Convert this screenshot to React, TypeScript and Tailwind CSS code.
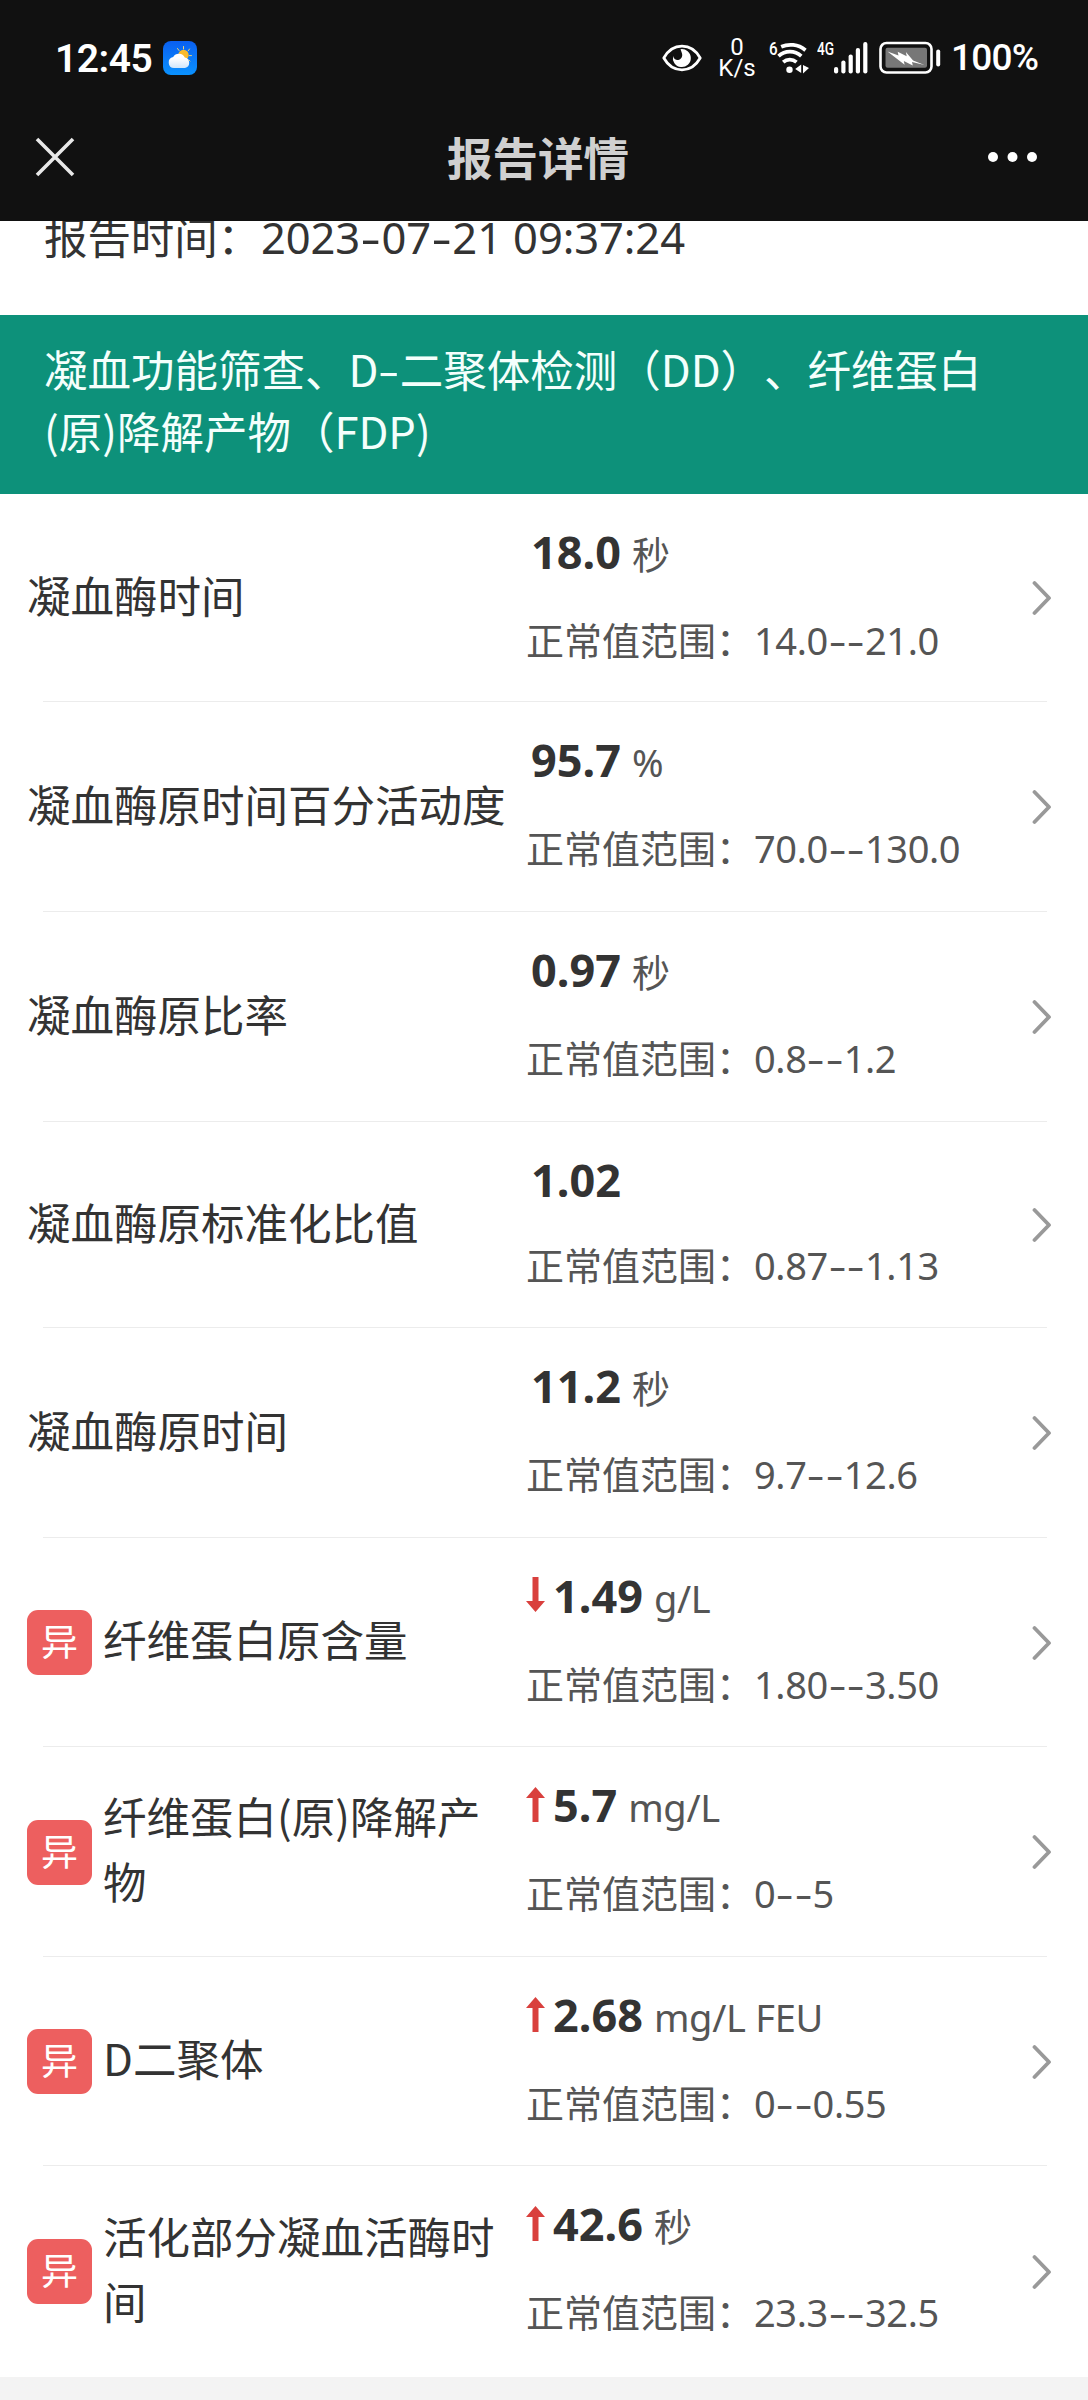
import React from "react";

type Item = {
  name: string;
  value: string;
  unit?: string;
  range: string;
  trend?: "up" | "down";
  height: string;
};

const items: Item[] = [
  { name: "凝血酶时间", value: "18.0", unit: "秒", range: "14.0--21.0", height: "h-[208px]" },
  { name: "凝血酶原时间百分活动度", value: "95.7", unit: "%", range: "70.0--130.0", height: "h-[210px]" },
  { name: "凝血酶原比率", value: "0.97", unit: "秒", range: "0.8--1.2", height: "h-[210px]" },
  { name: "凝血酶原标准化比值", value: "1.02", range: "0.87--1.13", height: "h-[206px]" },
  { name: "凝血酶原时间", value: "11.2", unit: "秒", range: "9.7--12.6", height: "h-[210px]" },
  { name: "纤维蛋白原含量", value: "1.49", unit: "g/L", range: "1.80--3.50", trend: "down", height: "h-[209px]" },
  { name: "纤维蛋白(原)降解产物", value: "5.7", unit: "mg/L", range: "0--5", trend: "up", height: "h-[210px]" },
  { name: "D二聚体", value: "2.68", unit: "mg/L FEU", range: "0--0.55", trend: "up", height: "h-[209px]" },
  { name: "活化部分凝血活酶时间", value: "42.6", unit: "秒", range: "23.3--32.5", trend: "up", height: "h-[211px]" },
];

const latin = "font-['Noto_Sans','Noto_Sans_CJK_SC',sans-serif]";
const cjk = "font-['Noto_Sans_CJK_SC',sans-serif]";
const roboto = "font-['Roboto',sans-serif]";

/** Text whose hyphens are drawn as wide as a digit's body. */
function Dashed({ text }: { text: string }) {
  return (
    <>
      {text.split(/(-)/).map((part, i) =>
        part === "-" ? (
          <span key={i} className="inline-block w-[0.49em] scale-x-[1.45] text-center">
            -
          </span>
        ) : (
          <React.Fragment key={i}>{part}</React.Fragment>
        ),
      )}
    </>
  );
}

function WeatherIcon() {
  return (
    <svg className="ml-[11px] h-[34px] w-[34px]" viewBox="0 0 34 34">
      <defs>
        <linearGradient id="sky" x1="0" y1="0" x2="0" y2="1">
          <stop offset="0" stopColor="#0a5ff0" />
          <stop offset="1" stopColor="#0a92ff" />
        </linearGradient>
        <linearGradient id="cloud" x1="0" y1="0" x2="0" y2="1">
          <stop offset="0.3" stopColor="#ffffff" />
          <stop offset="1" stopColor="#cfe6fb" />
        </linearGradient>
      </defs>
      <rect width="34" height="34" rx="8" fill="url(#sky)" />
      <g stroke="#e9d27a" strokeWidth="1" strokeLinecap="round">
        <path d="M20.5 5.5v2.5M14.5 7.5l1.5 2M26.5 8l-1.3 1.8M28.5 14.6h-2.3M27 20l-1.2-1" />
      </g>
      <circle cx="20.5" cy="14" r="5.2" fill="#f9bb2d" />
      <path d="M11 27a5.5 5.5 0 0 1-.8-10.9 6.5 6.5 0 0 1 11.6.5A5.3 5.3 0 0 1 22 27z" fill="url(#cloud)" />
    </svg>
  );
}

function EyeIcon() {
  return (
    <svg className="h-[28px] w-[40px]" viewBox="0 0 40 28">
      <path
        d="M1.8 14C6 6.5 12.500 2.200 20 2.200S34 6.500 38.200 14C34 21.500 27.500 25.800 20 25.800S6 21.500 1.800 14z"
        fill="none"
        stroke="#fff"
        strokeWidth="2.800"
        strokeLinejoin="round"
      />
      <path d="M18.500 5.200a9 9 0 1 1-7.400 6.700c.6 2.800 2.700 4.300 5 4 3-.4 4.800-3.400 3.900-6.500-.4-1.700-1.100-3-1.500-4.200z" fill="#fff" />
    </svg>
  );
}

function WifiIcon() {
  return (
    <svg className="h-[34px] w-[34px]" viewBox="0 0 34 34">
      <g fill="none" stroke="#fff" strokeWidth="3.700">
        <path d="M4.200 5.800C11.500 2.500 21 3 28.500 9.200" />
        <path d="M1.500 15.200C8 9.300 17.500 9 24.300 15.200" />
        <path d="M6.200 21.200C10 17.700 15.500 17.700 19.500 21.200" />
      </g>
      <circle cx="12.500" cy="28.700" r="3.200" fill="#fff" />
      <path d="M24.200 23.500v8.500l-6-4zM26 24v8.500l6-5.500z" fill="#fff" />
    </svg>
  );
}

function SignalIcon() {
  return (
    <svg className="h-[34px] w-[34px]" viewBox="0 0 34 34" fill="#fff">
      <rect x="0" y="26" width="4.200" height="6.500" rx="2" />
      <rect x="7.300" y="19.500" width="4.200" height="13" rx="2" />
      <rect x="14.600" y="13.500" width="4.200" height="19" rx="2" />
      <rect x="21.800" y="7" width="4.200" height="25.500" rx="2" />
      <rect x="29.200" y="1" width="4.200" height="31.500" rx="2" />
    </svg>
  );
}

function BatteryIcon() {
  return (
    <svg className="h-[34px] w-[62px]" viewBox="0 0 62 34">
      <rect x="1.500" y="2" width="51" height="29.500" rx="6" fill="none" stroke="#fff" strokeWidth="2.600" />
      <rect x="6.500" y="6.800" width="41.500" height="20" rx="2" fill="#777" />
      <path d="M8.500 10.500l11 4-.8-3.800 9 4.500-.8-4.200 7.200 8.500L45.500 24l-12.500-3 .8 3.500-9-4.500.8 3.800z" fill="#fff" />
      <rect x="57.200" y="8.500" width="4" height="17" rx="2" fill="#fff" />
    </svg>
  );
}

function TrendArrow({ trend }: { trend: "up" | "down" }) {
  return (
    <svg
      className={trend === "up" ? "mt-[15px] h-[35px] w-[19px]" : "mt-[14px] h-[35px] w-[19px] rotate-180"}
      viewBox="0 0 19 35"
      fill="#d9403d"
    >
      <path d="M9.500 0L19 11H12.500V35H6.500V11H0z" />
    </svg>
  );
}

function StatusBar() {
  return (
    <div className={`flex h-[115px] items-center pl-[55px] text-white ${roboto}`}>
      <div className="pt-[2px] text-[39px] leading-[40px] font-semibold tracking-[-0.5px]">12:45</div>
      <WeatherIcon />
      <div className="ml-auto flex items-center pr-[47px]">
        <EyeIcon />
        <div className="ml-[17px] flex w-[36px] flex-col items-center text-[24px] leading-[21px]">
          <span>0</span>
          <span>K/s</span>
        </div>
        <div className="ml-[14px] h-[34px] w-[8px] text-[19px] leading-[15px] font-medium">
          <div className="origin-left scale-x-[0.8]">6</div>
        </div>
        <WifiIcon />
        <div className="ml-[6px] h-[34px] w-[17px] text-[19px] leading-[15px] font-medium">
          <div className="origin-left scale-x-[0.72]">4G</div>
        </div>
        <SignalIcon />
        <div className="ml-[11px]">
          <BatteryIcon />
        </div>
        <div className="ml-[10px] w-[90px] pt-px text-[37px] leading-[40px] font-medium tracking-[-0.8px] whitespace-nowrap">
          100%
        </div>
      </div>
    </div>
  );
}

function NavBar() {
  return (
    <div className="flex h-[83px] items-center pr-[51px] pl-[35px]">
      <svg className="h-[40px] w-[40px]" viewBox="0 0 40 40" stroke="#e8e8e8" strokeWidth="3.600">
        <path d="M2 2L38 38M38 2L2 38" />
      </svg>
      <h1
        className={`ml-[372px] pb-[2px] text-[45.500px] leading-[60px] font-bold whitespace-nowrap text-[#d0d0d0] ${cjk}`}
      >
        报告详情
      </h1>
      <svg className="ml-auto h-[10px] w-[49px]" viewBox="0 0 49 10" fill="#fff">
        <circle cx="5" cy="5" r="5" />
        <circle cx="24.500" cy="5" r="5" />
        <circle cx="44" cy="5" r="5" />
      </svg>
    </div>
  );
}

function Row({ item, last }: { item: Item; last: boolean }) {
  return (
    <div className={`relative flex pl-[27px] ${item.height}`}>
      <div className="flex w-[487px] items-center">
        {item.trend && (
          <div
            className={`mr-[11px] flex h-[65px] w-[65px] shrink-0 items-center justify-center rounded-[11px] bg-[#ed5f5f] pb-[4px] text-[37px] leading-none text-white ${cjk}`}
          >
            异
          </div>
        )}
        <div className={`pb-[8px] text-[43.500px] leading-[65px] text-[#333] ${cjk}`}>{item.name}</div>
      </div>
      <div className={`ml-[12px] flex-1 pt-[25px] ${latin}`}>
        <div className="flex h-[66px] leading-[66px]">
          {item.trend ? <TrendArrow trend={item.trend} /> : null}
          <div className={item.trend ? "ml-[8px] flex items-baseline" : "ml-[5px] flex items-baseline"}>
            <span className="text-[45px] font-bold text-[#333]">{item.value}</span>
            {item.unit && <span className="ml-[11px] text-[38px] tracking-[-0.3px] text-[#555]">{item.unit}</span>}
          </div>
        </div>
        <div
          className={`text-[38px] leading-[58px] whitespace-nowrap text-[#555] ${item.unit ? "mt-[26px]" : "mt-[23px]"}`}
        >
          正常值范围：
          <span className="tracking-[-0.4px]">
            <Dashed text={item.range} />
          </span>
        </div>
      </div>
      <svg
        className="mr-[36px] h-[36px] w-[20px] self-center"
        viewBox="0 0 20 36"
        fill="none"
        stroke="#999"
        strokeWidth="3.800"
        strokeLinecap="round"
        strokeLinejoin="round"
      >
        <path d="M2.500 3L17 18L2.500 33" />
      </svg>
      {!last && <div className="absolute right-[41px] bottom-0 left-[43px] h-px bg-[#ececec]" />}
    </div>
  );
}

export default function App() {
  return (
    <div className="flex h-[2400px] w-[1088px] flex-col overflow-hidden bg-[#f3f3f3]">
      <header className="h-[221px] shrink-0 bg-[#111]">
        <StatusBar />
        <NavBar />
      </header>
      <main className="bg-white">
        <div
          className={`h-[94px] overflow-hidden pl-[44px] text-[43.500px] leading-[60px] tracking-[-0.1px] text-[#333] ${latin}`}
        >
          <div className="-mt-[14px]">
            报告时间：
            <Dashed text="2023-07-21 09:37:24" />
          </div>
        </div>
        <h2
          className={`h-[179px] bg-[#0d917a] pt-[23px] pl-[44px] text-[43.500px] leading-[62px] whitespace-nowrap text-[#f4fffc] [text-spacing-trim:space-all] ${cjk}`}
        >
          <Dashed text="凝血功能筛查、D-二聚体检测（DD）、纤维蛋白" />
          <br />
          (原)降解产物（FDP)
        </h2>
        {items.map((item, i) => (
          <Row key={item.name} item={item} last={i === items.length - 1} />
        ))}
      </main>
    </div>
  );
}
